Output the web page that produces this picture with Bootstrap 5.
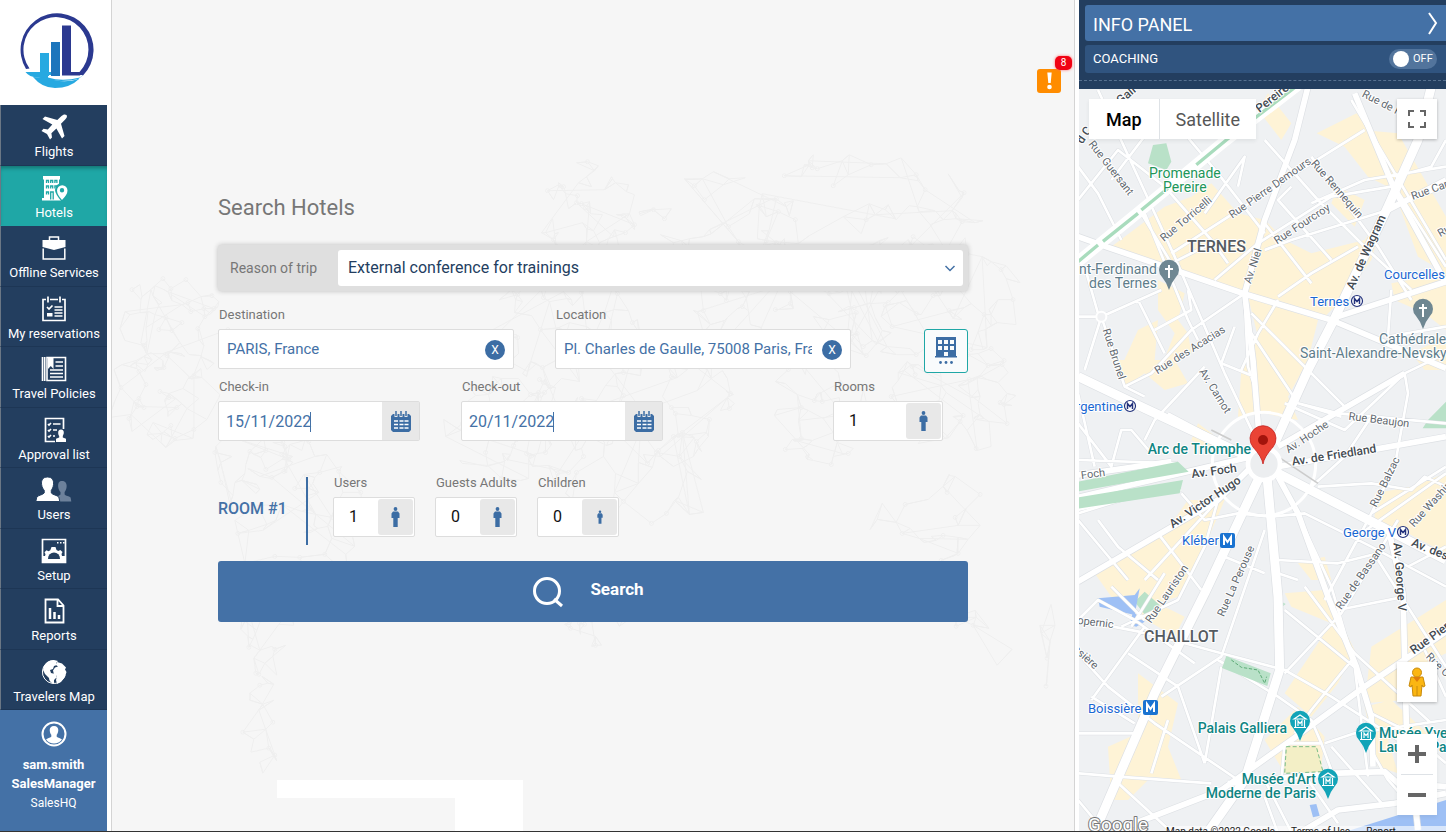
<!DOCTYPE html>
<html lang="en">
<head>
<meta charset="utf-8">
<meta name="viewport" content="width=device-width, initial-scale=1">
<title>Search Hotels</title>
<link href="https://cdn.jsdelivr.net/npm/bootstrap@5.3.0/dist/css/bootstrap.min.css" rel="stylesheet">
<style>
:root{--navy:#233e5f;--blue:#4471a6;--teal:#1fa7a6}
body{font-family:Roboto,"Liberation Sans",sans-serif;font-size:14px;background:#fff;color:#777}
svg{display:block}
.app-shell{border-bottom:1px solid #333}
/* sidebar */
.side{width:107px}
.brand-area{height:105px;padding-left:18px;padding-top:13px}
.side-item{background:var(--navy);color:#fff;min-height:60px;font-size:13px;line-height:18px;padding-top:8px;border-bottom:1px solid #1d3655;border-left:1px solid #6b7785;white-space:nowrap;text-decoration:none}
.side-item:hover{color:#fff}
.side-item.active{background:var(--teal);box-shadow:inset 0 4px 4px -2px #14706f;border-bottom-color:var(--teal)}
.side-item svg{width:28px;height:28px;margin-bottom:2px}
.profile{background:var(--blue);color:#fff;height:121px;padding-top:10px;line-height:19px;font-size:13px}
.profile svg{margin-bottom:7px}
.profile span{font-size:12px;line-height:20px}
/* main */
.stage{background:#f6f6f6;border-left:1px solid #d4d4d4;border-right:1px solid #d4d4d4;margin:0 4px}
.world{inset:0;width:100%;height:100%}
.alert-btn{top:55px;right:0;width:40px;height:40px}
.alert-count{top:1px;right:2px;width:17px;height:14px;border-radius:5px;background:#f00314;color:#fff;font-size:10px;line-height:14px;box-shadow:0 0 3px #f66}
.search-form{width:100%;max-width:750px;padding-top:193px}
.search-form h1{font-size:22px;line-height:30px;color:#777;margin-bottom:22px}
.reason{background:#dfdfdf;height:46px;padding:5px;border-radius:3px;box-shadow:0 0 5px #bbb}
.reason label{width:115px;padding-left:7px}
.reason .form-select{height:36px;color:var(--navy);border:0;border-radius:3px;font-size:16px;padding:0 30px 0 10px;background-position:right 7px center;background-size:12px 12px;--bs-form-select-bg-img:url("data:image/svg+xml,%3Csvg xmlns='http://www.w3.org/2000/svg' viewBox='0 0 12 12'%3E%3Cpath d='M1.500 4l4.500 4.500L10.500 4' fill='none' stroke='%234471a6' stroke-width='1.500'/%3E%3C/svg%3E")}
.place-row{gap:41px;margin-top:15px}
.date-row{gap:41px;margin-top:5px}
.room-row{margin-top:33px}
.flabel{display:block;font-size:13px;line-height:18px;margin-bottom:5px;white-space:nowrap;padding-left:1px}
.field{height:40px;background:#fff;border:1px solid #ddd;border-radius:2px}
.field input{width:100%;min-width:0;height:38px;border:0;background:transparent;color:var(--blue);font-size:15px;padding:0 38px 0 8px;outline:0}
.place{width:296px}
.clear-btn{right:8px;top:10px;width:20px;height:20px;border-radius:50%;border:0;background:#3c6da4;color:#fff;font-size:12px;line-height:20px}
.date{width:202px}
.date .field input{font-size:16px;padding:0 0 0 7px}
.caret{left:91px;top:10px;width:1px;height:20px;background:var(--blue)}
.tail-btn{border:0;background:#e8e8e8;flex:none;width:37px}
.count{width:82px}
.count .field{padding:1px}
.count .field input{height:36px;color:#111;font-size:16px;padding:0 0 2px 14px}
.count .tail-btn{width:35px;border-radius:3px}
.rooms{width:110px;margin-right:25px}
.nearby{width:44px;height:44px;margin-top:23px;border:1px solid var(--teal);border-radius:3px;background:#f9fbfc}
.room-name{width:90px;height:68px;border-right:2px solid #3c6da4;color:#4471a6;font-weight:500;font-size:16px;line-height:20px;padding-bottom:4px}
.room-fields{gap:20px;margin-left:25px;padding-bottom:11px}
.go{height:61px;margin-top:13px;background:var(--blue);color:#fff;border:0;border-radius:3px;font-size:17px;gap:26px;padding-right:16px}
.go span{padding-bottom:4px}
.foot-card{width:246px;margin-left:165px;z-index:1}
.foot-card .top-part{height:18px}
.foot-card .low-part{height:33px;width:68px}
/* info panel */
.info{width:367px;background:var(--navy)}
.info-head{height:89px;padding:5px 0 0 6px}
.info-title{height:36px;background:var(--blue);color:#fff;font-size:18px;padding:2px 8px 0;border-radius:3px 0 0 3px;border:0}
.coach{height:28px;background:#30547f;color:#fff;font-size:13px;margin-top:4px;padding:0 9px 0 8px;border-radius:3px 0 0 3px}
.coach .switch{width:48px;height:20px;border-radius:10px;background:#52749c;font-size:11px}
.coach .switch i{width:16px;height:16px;border-radius:50%;background:#fff;margin:0 4px 0 4px}
.dash{border-top:1px dashed #56708f;margin-top:7px;margin-left:-6px}
.map-area{background:#f0f1f3;overflow:hidden}
.city{inset:0;width:100%;height:100%}
.mapbtn{background:#fff;border:0;box-shadow:0 1px 3px #0004;color:#565656}
.maptype{left:10px;top:10px}
.maptype .mapbtn{height:40px;font-size:18px;padding:0 17px;box-shadow:none}
.maptype .mapbtn+.mapbtn{padding:0 16px}
.maptype .chosen{font-weight:500}
.full-btn{right:9px;top:10px;width:40px;height:40px}
.man-btn{right:9px;bottom:129px;width:40px;height:40px}
.zoom-btns{right:9px;bottom:16px;width:40px}
.zoom-btns .mapbtn{height:40px;box-shadow:none}
.credit{left:87px;right:0;bottom:0;height:5px;overflow:hidden;font-size:10px;line-height:12px;color:#222;background:#fff9}
.city text{font-family:Roboto,"Liberation Sans",sans-serif;font-size:11px;fill:#626970;paint-order:stroke;stroke:#fff;stroke-width:2px;stroke-linejoin:round}
.city .st text{text-anchor:middle;dominant-baseline:central}
.city .st .av{font-size:12px;fill:#444b52;font-weight:500}
.city .poi{font-size:14px}
.city .end{text-anchor:end}
.city .gr{fill:#22965a}.city .sl{fill:#607d8b}.city .mt{fill:#1967d2;font-size:13px}.city .te{fill:#0f8583;font-weight:500;font-size:14px}
.city .qu{font-size:16px;fill:#555b61;font-weight:500}
.city .logo-text{font-size:19px;fill:#fff;stroke:#777}
</style>
</head>
<body>
<div class="app-shell d-flex min-vh-100">

<nav class="side d-flex flex-column flex-shrink-0" aria-label="Main">
  <div class="brand-area">
    <svg width="76" height="76" viewBox="18 13 76 76" role="img" aria-label="Logo">
      <path d="M26 69A36.500 36.500 0 1 1 83 75.500H62V72H79.500A32.500 32.500 0 1 0 29.500 68.500z" fill="#2b3990"/>
      <path d="M25.500 72H51V76H62L83 75Q77 81 69 84Q76 81 79 79Q60 83 46 79L38 77.500Q29 77 25.500 72z" fill="#27a9e1"/>
      <path d="M33 77Q44 77 54 80Q66 83 79 79Q70 88 55 88Q42 88 33 77z" fill="#27a9e1"/>
      <path d="M48 77.500Q62 82 80 77.500L83 75H48z" fill="#fff"/><path d="M62 72h20l-2 3.500H62z" fill="#2b3990"/>
      <rect x="40" y="53" width="9" height="23" fill="#27a9e1"/><rect x="51" y="42" width="9" height="34" fill="#1c75bc"/>
      <path d="M62 25.500h9V75h-9z" fill="#2b3990"/>
    </svg>
  </div>
  <div class="d-flex flex-column flex-grow-1">
    <a href="#" class="side-item flex-fill d-flex flex-column align-items-center">
      <svg viewBox="0 0 28 28" fill="#fff"><path d="M26.500 2c-1.500-1.200-3.500-.5-5 1l-4.200 4L5 3.500 2.500 6l9.800 5.500-4.500 5-4.300-.7L1.500 18l5.500 3 3 5.500 2-2-.6-4.300 5-4.600L22 25.500l2.500-2.600L21 10.800l4.200-4.300C26.800 5 27.500 3.200 26.500 2z"/></svg>Flights</a>
    <a href="#" class="side-item active flex-fill d-flex flex-column align-items-center" aria-current="page">
      <svg viewBox="0 0 28 28"><path fill="#fff" d="M3 2h17v3.500h-1V25H4V5.500H3zM2 24h19v2.500H2z"/><path fill="none" stroke="#1fa7a6" stroke-width="1.300" d="M6.500 9V6.500h2V9m2.200 0V6.500h2V9m2.200 0V6.500h2V9M6.500 14.500V12h2v2.500m2.200 0V12h2v2.500m2.200 0V12h2v2.500M6.500 20.500V18h2v2.500m2.200 5V18h2.500v7.500"/><path d="M22 28q-7-8-7-12a7 7 0 0 1 14 0q0 4-7 12z" fill="#1fa7a6"/><path fill="#fff" fill-rule="evenodd" d="M22 26q-5-5.500-5-9.500a5 5 0 0 1 10.500 0q0 4-5.500 9.500zm0-7.500a2.200 2.200 0 1 0 0-4.400 2.200 2.200 0 0 0 0 4.400z"/></svg>Hotels</a>
    <a href="#" class="side-item flex-fill d-flex flex-column align-items-center">
      <svg viewBox="0 0 28 28"><path fill="#fff" d="M2.500 6h23v7L14 16 2.500 13z"/><path fill="none" stroke="#fff" stroke-width="1.500" d="M9.500 6V3h9v3M3.200 14.500V25h21.600V14.500"/></svg>Offline Services</a>
    <a href="#" class="side-item flex-fill d-flex flex-column align-items-center">
      <svg viewBox="0 0 28 28"><path fill="none" stroke="#fff" stroke-width="1.700" d="M6 4.500H3v21h22v-21h-3M10 4.500h8M8 1.500v6M20 1.500v6M12.500 4.500h3M7 12l2 2 3.500-3.500M14.500 12h8M14.500 15h8M14.500 18h8M14.500 21h8"/><path fill="#fff" d="M7 18h5.500v3.500H7z"/></svg>My reservations</a>
    <a href="#" class="side-item flex-fill d-flex flex-column align-items-center">
      <svg viewBox="0 0 28 28"><path fill="none" stroke="#fff" stroke-width="1.600" d="M7 2.500h18.500v23H7zM2.500 2v24M4.700 2v24M15.500 7H23M15.500 11H23M10 15h13M10 18.500h13M10 22h13"/><path fill="#fff" d="M8 2h5.500v12l-2.700-3L8 14z"/></svg>Travel Policies</a>
    <a href="#" class="side-item flex-fill d-flex flex-column align-items-center">
      <svg viewBox="0 0 28 28"><path fill="none" stroke="#fff" stroke-width="1.700" d="M23.500 13V2.500h-18v23H15M8 8l1 1 2-2M13 8h7.500M8 14l1 1 2-2M13 14h4M8 20l1 1 2-2M13 20h2"/><path fill="#fff" d="M21 13.500c2 0 3 1.500 2.800 3.500-.2 1.500-.8 2.300-1 3v1.500l3.200 1.300V26H16v-3.200l3.200-1.300V20c-.5-.7-1-1.500-1-3-.2-2 .8-3.500 2.800-3.500z"/></svg>Approval list</a>
    <a href="#" class="side-item flex-fill d-flex flex-column align-items-center">
      <svg viewBox="0 0 28 28" overflow="visible"><path fill="#6d819b" d="M22 5c3.500 0 5 2.700 4.600 6-.3 2.500-1.200 4-2 5v2.500c1.500 1.500 4 1.500 6 3l.7 4H18l-2-4 4.500-3V16c-1-1-2-2.500-2.300-5C18 7.700 18.500 5 22 5z"/><path fill="#fff" stroke="#233e5f" d="M7.500 1C12 1 14 4 13.500 8.500c-.3 3-1.300 4.500-2.200 5.700V17c1.700 2 5.500 2 7.500 4l1 4.500H-4.200l1-4.500c2-2 5.700-2 7.400-4v-2.800C3 13 2 11.500 1.600 8.500 1 4 3 1 7.500 1z"/></svg>Users</a>
    <a href="#" class="side-item flex-fill d-flex flex-column align-items-center">
      <svg viewBox="0 0 28 28"><path fill="none" stroke="#fff" stroke-width="1.700" d="M2.500 2.500h23v23h-23z"/><path fill="#fff" d="M17 5h1.500v1.500H17zM20 5h1.500v1.500H20zM23 5h1.500v1.500H23zM2.500 25V19H5l.5-1.800-1-2 2-2 2 1 1.800-1L11.500 10h4l1 3 1.800 1 2-1 2.200 2-1 2L22 19h3v6z"/><path fill="#233e5f" d="M8 21.500a6 6 0 0 1 12 0 6 6 0 0 1-2 3.500h-8a6 6 0 0 1-2-3.500z"/><path fill="#fff" d="M7 22h14v4H7z"/></svg>Setup</a>
    <a href="#" class="side-item flex-fill d-flex flex-column align-items-center">
      <svg viewBox="0 0 28 28"><path fill="none" stroke="#fff" stroke-width="1.800" d="M18 2.500H5.500v23h18V8.500zM17.500 2.500v6.500h6"/><path stroke="#fff" stroke-width="2.500" d="M10 11v11M14.500 15v7M19 18v4"/></svg>Reports</a>
    <a href="#" class="side-item flex-fill d-flex flex-column align-items-center">
      <svg viewBox="0 0 28 28"><path fill="none" stroke="#fff" d="M14 2.500A11.500 11.500 0 1 0 25 17"/><path fill="#fff" d="M4 8Q7 2 14 2l4 1-2 2 1 2-3 1-1 3-3 1 1 3 4 1 2 3-3 3v4q-5-2-5-6l-4-4-2-4zM17 4l5 1.500 4 4-1 2 1.500 2.500-1.500 5-4 5-4 2-1-4 1-4-3-1.500-1-4 2-3 3-1-2-1.500z"/></svg>Travelers Map</a>
  </div>
  <div class="profile d-flex flex-column align-items-center">
    <svg width="28" height="28" viewBox="0 0 28 28"><circle cx="14" cy="14" r="11.500" fill="none" stroke="#fff" stroke-width="2"/><path fill="#fff" d="M14 6c3.300 0 4.600 2.300 4.200 5-.2 2-.9 3-1.500 3.800v2c1.300 1.200 4 1.400 5.300 2.700A10 10 0 0 1 6 19.500c1.300-1.300 4-1.500 5.300-2.700v-2C10.600 14 10 13 9.800 11 9.400 8.300 10.700 6 14 6z"/></svg>
    <strong>sam.smith</strong><strong>SalesManager</strong><span>SalesHQ</span>
  </div>
</nav>

<main class="stage flex-grow-1 position-relative d-flex flex-column">
  <svg class="world position-absolute" viewBox="112 0 963 832" preserveAspectRatio="xMidYMid slice" fill="none" stroke="#efefef" aria-hidden="true"><path id="mesh" stroke-width="1"/></svg>
  <button type="button" class="alert-btn btn p-0 border-0 position-absolute" aria-label="Alerts">
    <svg width="40" height="40" viewBox="0 0 40 40"><rect x="3" y="14" width="24" height="24" rx="3" fill="#ff8c00"/><path d="M13.300 17.500h4.400l-1 10.500h-2.400z" fill="#fff"/><circle cx="15.500" cy="32" r="2.300" fill="#fff"/></svg>
    <span class="alert-count position-absolute">8</span>
  </button>
  <form class="search-form mx-auto position-relative">
    <h1 class="fw-normal">Search Hotels</h1>
    <div class="reason d-flex align-items-center">
      <label for="reason" class="flex-shrink-0">Reason of trip</label>
      <select id="reason" class="form-select"><option>External conference for trainings</option></select>
    </div>
    <div class="place-row d-flex align-items-start">
      <div class="place"><label class="flabel" for="dest">Destination</label>
        <div class="field position-relative"><input id="dest" value="PARIS, France"><button type="button" class="clear-btn position-absolute p-0" aria-label="Clear destination">X</button></div></div>
      <div class="place"><label class="flabel" for="loc">Location</label>
        <div class="field position-relative"><input id="loc" value="Pl. Charles de Gaulle, 75008 Paris, France"><button type="button" class="clear-btn position-absolute p-0" aria-label="Clear location">X</button></div></div>
      <button type="button" class="nearby ms-auto p-0 d-flex align-items-center justify-content-center" aria-label="Hotels list">
        <svg width="24" height="30" viewBox="0 0 24 30" fill="#3c6da4"><path fill-rule="evenodd" d="M2 1h20v19h1v1.500H1V20h1zm2 3v4h4V4zm6 0v4h4V4zm6 0v4h4V4zM4 10v4h4v-4zm6 0v4h4v-4zm6 0v4h4v-4zm-6 6v4h4v-4z"/><circle cx="6.500" cy="26.500" r="1.400"/><circle cx="12" cy="26.500" r="1.400"/><circle cx="17.500" cy="26.500" r="1.400"/></svg></button>
    </div>
    <div class="date-row d-flex align-items-start">
      <div class="date"><label class="flabel" for="cin">Check-in</label>
        <div class="field d-flex position-relative"><input id="cin" value="15/11/2022"><span class="caret position-absolute"></span><button type="button" class="tail-btn p-0 d-flex align-items-center justify-content-center" aria-label="Pick check-in"><svg width="20" height="21" viewBox="0 0 20 21"><use href="#calendar"/></svg></button></div></div>
      <div class="date"><label class="flabel" for="cout">Check-out</label>
        <div class="field d-flex position-relative"><input id="cout" value="20/11/2022"><span class="caret position-absolute"></span><button type="button" class="tail-btn p-0 d-flex align-items-center justify-content-center" aria-label="Pick check-out"><svg width="20" height="21" viewBox="0 0 20 21"><use href="#calendar"/></svg></button></div></div>
      <div class="count rooms ms-auto"><label class="flabel" for="rooms">Rooms</label>
        <div class="field d-flex"><input id="rooms" value="1"><button type="button" class="tail-btn p-0 d-flex align-items-center justify-content-center" aria-label="Add room"><svg width="9" height="20" viewBox="0 0 9 20"><use href="#person"/></svg></button></div></div>
    </div>
    <div class="room-row d-flex align-items-center">
      <div class="room-name d-flex align-items-center">ROOM #1</div>
      <div class="room-fields d-flex">
        <div class="count"><label class="flabel" for="users">Users</label>
          <div class="field d-flex"><input id="users" value="1"><button type="button" class="tail-btn p-0 d-flex align-items-center justify-content-center" aria-label="Add user"><svg width="9" height="20" viewBox="0 0 9 20"><use href="#person"/></svg></button></div></div>
        <div class="count"><label class="flabel" for="adults">Guests Adults</label>
          <div class="field d-flex"><input id="adults" value="0"><button type="button" class="tail-btn p-0 d-flex align-items-center justify-content-center" aria-label="Add adult"><svg width="9" height="20" viewBox="0 0 9 20"><use href="#person"/></svg></button></div></div>
        <div class="count"><label class="flabel" for="kids">Children</label>
          <div class="field d-flex"><input id="kids" value="0"><button type="button" class="tail-btn p-0 d-flex align-items-center justify-content-center" aria-label="Add child"><svg width="6" height="14" viewBox="0 0 9 20"><use href="#person"/></svg></button></div></div>
      </div>
    </div>
    <button type="submit" class="go w-100 d-flex align-items-center justify-content-center fw-bold">
      <svg width="32" height="32" viewBox="0 0 32 32" fill="none" stroke="#fff" stroke-width="3"><circle cx="15" cy="15" r="12.500"/><path d="M22 23l8 7"/></svg><span>Search</span></button>
  </form>
  <div class="foot-card mt-auto"><div class="top-part bg-white"></div><div class="low-part bg-white ms-auto"></div></div>
</main>

<aside class="info flex-shrink-0 d-flex flex-column">
  <div class="info-head">
    <button type="button" class="info-title w-100 d-flex align-items-center justify-content-between">INFO PANEL
      <svg width="10" height="24" viewBox="0 0 10 24" fill="none" stroke="#fff" stroke-width="2"><path d="M1 1l7 10-7 11"/></svg></button>
    <div class="coach d-flex align-items-center justify-content-between"><span>COACHING</span>
      <button type="button" class="switch d-flex align-items-center border-0 p-0 text-white" role="switch" aria-checked="false"><i></i>OFF</button></div>
    <div class="dash"></div>
  </div>
  <div class="map-area position-relative flex-grow-1">
    <svg class="city position-absolute" viewBox="1079 89 367 742" preserveAspectRatio="xMidYMid slice" role="img" aria-label="Map of Paris around the Arc de Triomphe">
      <defs>
        <g id="person" fill="#3c6da4"><circle cx="4.500" cy="2" r="1.900"/><path d="M2 4.500h5L8.500 6.500V11H6.700v9H2.300v-9H.5V6.500z"/></g>
        <g id="calendar"><path fill="#3c6da4" d="M2 3h16l2 2v14l-2 2H2l-2-2V5z"/><path stroke="#e8e8e8" stroke-width="3" d="M5 0v6M10 0v6M15 0v6"/><path stroke="#3c6da4" stroke-width="1.500" d="M5 0v5M10 0v5M15 0v5"/><path stroke="#fff" stroke-width="1.500" d="M3 10h4M8.500 10h4M13.500 10h4M3 13.500h4M8.500 13.500h4M13.500 13.500h4M3 17h4M8.500 17h4M13.500 17h4"/></g>
        <path id="minor" d="M60 270L290 770L440 1120L540 1330M0 600L120 450L260 560M130 720L60 580L0 500M100 540L260 330L420 520L560 700M190 640L280 790L420 720M200 640L330 960L360 1020M260 560L400 720L450 790M410 840L540 730L760 590L940 560M380 640L500 470L480 560M280 760L700 490L860 390M560 420L720 600L870 750L1000 870M640 560L600 600L760 780M700 610L860 540L1104 500M560 670L700 850M560 750L640 720L930 630M600 890L700 820L840 740M930 620L1104 560M950 560L1104 800M820 300L1104 780M700 470L900 740L1000 900M990 520L1060 500L1104 420M60 940L20 800M0 950L70 950L250 870M70 950L20 1110M70 950L140 1160L220 1120L340 990L500 880M230 990L340 930L330 870M180 900L260 1060M500 900L510 1100L530 1160M520 1000L660 1210L780 1240L1104 1270M520 940L800 1220L980 1120L1104 1060M940 870L930 1010L1104 980M490 1110L540 1000L600 900M470 980L430 1090L530 1130M620 1210L800 1290L980 1120M660 1210L790 1250M980 1120L990 1180L950 1400L870 1560L740 1800M700 1460L800 1370L880 1250M720 1460L880 1450L1000 1470L1040 1430L1104 1460M880 1540L1104 1400M850 1600L1104 1420M0 1180L50 1400M0 1270L100 1400L130 1290L160 1290L220 1360M200 1320L230 1260L380 1100M270 1240L440 1330M140 1160L200 1190M0 1380L300 1390M0 1540L130 1500L310 1470M310 1480L380 1560L480 1540L580 1550L680 1540L880 1640L1104 1760M0 1560L150 1740M200 1740L420 1500L380 1640L300 1800L130 1880M60 1560L120 1640L240 1740M240 1600L370 1770M260 1720L160 1880M100 1760L200 1860M0 1860L60 1800L170 1860L350 1990M200 1880L40 2100M0 1860L210 1900L430 1960L620 2010L760 2090L960 2220M430 2000L380 2290M250 2090L430 1970L560 1590M150 1960L300 2060L380 2290M0 1960L90 2060L230 2170L480 2340M40 2090L170 2170M0 2200L180 2200M0 2320L120 2330L400 2350M110 2340L280 2496M220 2320L270 2160M440 1670L560 1720M420 1980L600 2090L700 2160L730 2230L620 2230L610 2340M640 1500L760 1760L830 2000L870 2330M660 1740L600 1720M600 1680L780 1690L900 1660M620 1830L840 2010M680 1760L830 1960M620 2020L790 1840L960 1560M830 1970L700 2130L650 2200M780 1830L980 1790M830 1960L1060 2170M900 1680L1104 2000M740 2230L830 2200L1104 2160M730 2230L760 2310M760 2240L920 2420M560 2340L640 2496M690 2340L780 2470M600 2500L560 2390M0 2400L80 2496M840 2180L930 2340L1000 2420M990 1700L1104 1640M880 2140L1000 2200L1104 2290M1040 1950L1104 2090"/>
        <path id="major" d="M690 260L650 420L560 660L500 880L525 1080L545 1330M0 710L90 742L500 882L760 960L1104 1105M780 950L1104 845M830 280L950 570L1104 850M1104 540L930 630M600 1340L980 1120M600 1400L1104 1310M520 1370L0 1492M520 1400L420 1500L0 1745M150 1490L0 1525M0 1425L280 1385M600 1430L660 1540L750 1790L835 2000L880 2150L885 2300M930 1580L975 1780L985 2170L1020 2490M120 2490L430 2370L640 2220L860 2060L1104 1895M450 2350L760 2320L920 2315L960 2350L1104 2360M670 2496L780 2430L950 2410L1104 2380"/>
        <path id="prime" d="M0 1130L200 1225L510 1370M600 1420L930 1590L1104 1680M590 1330L690 1110L765 965L930 620L1020 420L1060 260M540 1440L380 1780L230 2080L50 2496M568 1440L600 1790L605 2010L500 2340L390 2496"/>
        <path id="church" d="M0 19Q-2 12-7 6A10 10 0 1 1 7 6Q2 12 0 19z"/>
      </defs>
      <g transform="translate(1078) scale(.33333)">
        <path fill="#eff1f3" d="M0 260H1110V2500H0z"/>
        <path fill="#fef3d6" d="M100 740L180 680L260 620L340 590L400 550L480 640L560 660L620 720L700 760L860 720L920 640L880 780L790 900L740 950L560 900L440 860L300 810zM510 890L720 960L690 1080L630 1190L660 1260L560 1240L480 1250L490 1110L540 1010zM240 840L320 880L300 960L330 1000L340 1060L250 1100L290 1000L240 930zM716 400L836 340L950 470L930 560L870 530L800 440zM850 390L960 400L1104 650V820L1020 770L950 580zM780 560L860 600L830 680L760 610zM570 280L640 370L610 420L540 330zM940 850L1104 820V990L1040 940L950 900zM100 1080L290 1080L330 1150L260 1170L200 1120L140 1160zM180 990L240 960L230 1080L130 1100zM1000 1060L1104 1010V1110L1040 1110zM890 1480L1000 1460L1104 1420V1660L990 1600L890 1560zM50 1720L260 1600L330 1500L440 1500L380 1640L300 1790L200 1820L100 1790zM200 1790L320 1850L290 1910L190 1850zM620 1780L740 1770L830 1950L780 2050L700 2150L620 2080L680 1990L760 1870L640 1820zM660 1690L740 1670L760 1740L700 1740zM180 2020L300 2110L270 2240L310 2340L220 2330L150 2400L100 2400L90 2240L180 2200zM880 1940L1104 1800V1960L1000 2010L980 2100L860 2110zM560 2220L660 2120L740 2210L730 2300L620 2320zM860 2120L940 2100L1080 2230L990 2190L930 2220L960 2320L900 2300zM360 1270L440 1330L420 1360L340 1320z"/>
        <path fill="#b9e1c8" d="M225 435l40-5 15 55-15 25-55-20zM170 1805l30-30 45 40-32 45zM1050 1260l54-55v80h-70zM605 1802l18 10-15 12z"/>
        <path fill="#9ec0f5" d="M60 1795l110-10 15-20-15 80-105-25zM165 1835l35 30-25 15-20-5zM800 2496L1104 2400V2496zM695 2415l20-3 10 35-20 5z"/>
        <g fill="none" stroke-linejoin="round">
          <use href="#minor" stroke="#dde0e4" stroke-width="11"/><use href="#major" stroke="#dde0e4" stroke-width="21"/><use href="#prime" stroke="#dde0e4" stroke-width="31"/>
          <use href="#minor" stroke="#fff" stroke-width="8"/><circle cx="558" cy="1392" r="155" stroke="#fff" stroke-width="9"/>
          <use href="#major" stroke="#fff" stroke-width="17"/><use href="#prime" stroke="#fff" stroke-width="27"/>
          <path d="M660 255L445 420L190 630L0 785" stroke="#fff" stroke-width="34"/><path d="M660 255L445 420L355 494M270 565L190 630M180 640L75 724M60 735L0 785" stroke="#a9dcbd" stroke-width="10"/>
          <circle cx="70" cy="950" r="15" fill="#f0f1f3" stroke="#fff" stroke-width="6"/>
          <path d="M600 1370l120 80M400 1290l60 30" stroke="#ccc" stroke-width="5"/>
        </g>
        <path fill="#b9e1c8" d="M0 1445L300 1385l32 30L0 1474zM0 1492l315-52-10 40L0 1526zM445 1968L578 2020l-10 38L432 2004z"/>
        <circle cx="558" cy="1392" r="48" fill="#eceef0" stroke="#fff" stroke-width="14"/>
        <path d="M625 2240h90l20 75-115 5z" fill="#f3efc6" stroke="#79bd86" stroke-width="3" stroke-dasharray="12 7"/>
        <path d="M460 1980l30 22 50 8 20 40 6-20" fill="none" stroke="#5cab76" stroke-width="3" stroke-dasharray="10 5"/>
      </g>
      <g class="st">
        <text transform="translate(1111 168) rotate(52)">Rue Guersant</text><text transform="translate(1186 219) rotate(-40)">Rue Torricelli</text>
        <text transform="translate(1270 188) rotate(-35)">Rue Pierre Demours</text><text transform="translate(1337 189) rotate(49)">Rue Rennequin</text>
        <text transform="translate(1302 224) rotate(-33)">Rue Fourcroy</text><text transform="translate(1441 186) rotate(-20)">Rue Cardinet</text>
        <text transform="translate(1253 266) rotate(-72)">Av. Niel</text><text class="av" transform="translate(1366 252) rotate(-66)">Av. de Wagram</text>
        <text transform="translate(1190 350) rotate(-32)">Rue des Acacias</text><text transform="translate(1114 354) rotate(72)">Rue Brunel</text>
        <text transform="translate(1215 391) rotate(58)">Av. Carnot</text><text transform="translate(1307 437) rotate(-34)">Av. Hoche</text>
        <text class="av" transform="translate(1334 455) rotate(-9)">Av. de Friedland</text><text transform="translate(1379 420) rotate(7)">Rue Beaujon</text>
        <text transform="translate(1385 482) rotate(-64)">Rue Balzac</text><text transform="translate(1438 496) rotate(-48)">Rue Washington</text>
        <text class="av" transform="translate(1214 471) rotate(-8)">Av. Foch</text><text transform="translate(1093 474) rotate(-8)">Foch</text>
        <text class="av" transform="translate(1205 502) rotate(-34)">Av. Victor Hugo</text><text class="av" transform="translate(1452 558) rotate(22)">Av. des Champs</text>
        <text class="av" transform="translate(1400 577) rotate(86)">Av. George V</text><text transform="translate(1361 576) rotate(-55)">Rue de Bassano</text>
        <text transform="translate(1167 594) rotate(-56)">Rue Lauriston</text><text transform="translate(1236 581) rotate(-66)">Rue La Perouse</text>
        <text transform="translate(1092 622) rotate(7)">Copernic</text><text transform="translate(1080 652) rotate(42)">Boissière</text>
        <text class="av" transform="translate(1434 635) rotate(-36)">Rue Pierre</text><text transform="translate(1440 667) rotate(45)">Rue Ch</text>
        <text transform="translate(1382 103) rotate(27)">Rue de P</text><text class="av" transform="translate(1272 98) rotate(-38)">Pereire</text><text transform="translate(1126 95) rotate(-40)" class="av">Gall</text>
        <text class="av" transform="translate(1084 135) rotate(-55)">d C</text><text transform="translate(1444 231) rotate(-30)">Ru</text>
      </g>
      <text class="poi gr" x="1149" y="178">Promenade</text><text class="poi gr" x="1163" y="192">Pereire</text>
      <text class="qu" x="1187" y="252">TERNES</text><text class="qu" x="1144" y="642">CHAILLOT</text>
      <text class="poi sl end" x="1157" y="274">Saint-Ferdinand</text><text class="poi sl end" x="1157" y="288">des Ternes</text>
      <text class="poi sl" x="1379" y="344">Cathédrale</text><text class="poi sl" x="1300" y="358">Saint-Alexandre-Nevsky</text>
      <text class="mt" x="1384" y="279">Courcelles</text><text class="mt" x="1310" y="306">Ternes</text><text class="mt end" x="1123" y="411">Argentine</text>
      <text class="mt" x="1343" y="537">George V</text><text class="mt" x="1182" y="545">Kléber</text><text class="mt" x="1088" y="713">Boissière</text>
      <text class="poi te end" x="1251" y="454">Arc de Triomphe</text><text class="poi te end" x="1287" y="733">Palais Galliera</text>
      <text class="poi te end" x="1316" y="784">Musée d'Art</text><text class="poi te end" x="1316" y="798">Moderne de Paris</text>
      <text class="poi te" x="1379" y="738">Musée Yves</text><text class="poi te" x="1379" y="752">Laurent Paris</text>
      <g fill="none" stroke="#23327c"><g id="mring"><circle cx="1357" cy="301" r="5.500" fill="#fff" stroke-width="1.200"/><path d="M1354.500 304v-5.500l2.500 3 2.500-3v5.500" stroke-width="1.500"/></g><use href="#mring" x="-227" y="105"/><use href="#mring" x="46" y="231"/></g>
      <g id="msq"><rect x="1220" y="533" width="15" height="15" rx="2" fill="#1a73d1"/><path d="M1224 545v-8l3.500 5 3.500-5v8" fill="none" stroke="#fff" stroke-width="2"/></g><use href="#msq" x="-77" y="167"/>
      <g fill="#6f8792"><use href="#church" x="1169" y="271"/><use href="#church" x="1423" y="310"/></g>
      <path d="M1169 265v13M1165 269h8M1423 304v13M1419 308h8" stroke="#fff" stroke-width="2"/>
      <g id="museum"><use href="#church" x="1300" y="722" fill="#12a4b8"/><path d="M1294 719l6-4 6 4zM1295.500 720v7M1304.500 720v7M1294 727.500h12M1298 726v-5l2 2.500 2-2.500v5" fill="none" stroke="#fff" stroke-width="1.200"/></g>
      <use href="#museum" x="66" y="12"/><use href="#museum" x="28" y="58"/>
      <path d="M1263 464Q1262 457 1253 447A13 13 0 1 1 1273 447Q1264 457 1263 464z" fill="#ea4335" stroke="#c5221f" stroke-width=".8"/><circle cx="1263" cy="440" r="5" fill="#a3140c"/>
      <text class="logo-text" x="1088" y="831">Google</text>
    </svg>
    <div class="maptype position-absolute d-flex shadow-sm"><button type="button" class="mapbtn chosen text-black border-end">Map</button><button type="button" class="mapbtn">Satellite</button></div>
    <button type="button" class="mapbtn full-btn position-absolute p-0 d-flex align-items-center justify-content-center" aria-label="Full screen"><svg width="18" height="18" viewBox="0 0 18 18" fill="none" stroke="#666" stroke-width="2"><path d="M1 6V1h5M12 1h5v5M17 12v5h-5M6 17H1v-5"/></svg></button>
    <button type="button" class="mapbtn man-btn position-absolute p-0 d-flex align-items-center justify-content-center" aria-label="Street view"><svg width="18" height="30" viewBox="0 0 18 30"><path d="M3 10h12l2 9-2 1-1-2-1 11H5L4 18l-1 2-2-1z" fill="#fbb612" stroke="#c88a0c"/><circle cx="9" cy="5.500" r="4.500" fill="#fbb612" stroke="#c88a0c"/><path d="M5 10h8l-4 5z" fill="#e07d0b"/><path d="M9 19v10" stroke="#c88a0c"/></svg></button>
    <div class="zoom-btns position-absolute shadow-sm bg-white d-flex flex-column">
      <button type="button" class="mapbtn p-0 d-flex align-items-center justify-content-center" aria-label="Zoom in"><svg width="18" height="18" viewBox="0 0 18 18" stroke="#666" stroke-width="4"><path d="M0 9h18M9 0v18"/></svg></button>
      <div class="border-top mx-1"></div>
      <button type="button" class="mapbtn p-0 d-flex align-items-center justify-content-center" aria-label="Zoom out"><svg width="18" height="18" viewBox="0 0 18 18" stroke="#666" stroke-width="4"><path d="M0 9h18"/></svg></button>
    </div>
    <div class="credit position-absolute d-flex gap-3"><span>Map data ©2022 Google</span><span>Terms of Use</span><span>Report</span></div>
  </div>
</aside>
</div>
<script src="https://cdn.jsdelivr.net/npm/bootstrap@5.3.0/dist/js/bootstrap.bundle.min.js"></script>
<script>
// Faint network-style world map: scattered nodes per land mass, linked to near neighbours.
let seed = 7;
const rnd = () => (seed = seed * 16807 % 2147483647) / 2147483647;
const lands = [[170,330,60,55,70],[160,400,60,50,60],[250,470,45,50,40],[300,520,70,80,60],[270,640,35,50,30],[262,730,20,60,20],
 [590,220,50,60,60],[720,230,90,60,60],[860,210,130,60,60],[920,300,110,70,90],[800,310,110,60,90],[560,330,80,60,80],[520,430,80,60,70],[660,400,80,70,80],
 [640,480,80,60,30],[600,620,40,30,25],[820,410,50,60,50],[960,400,70,60,70],[930,520,60,50,30],[980,640,40,40,8],[1050,640,15,60,8]];
let d = '';
for (const [cx, cy, rx, ry, n] of lands) {
  const pts = Array.from({length: n}, () => { const a = rnd() * 6.283, r = Math.sqrt(rnd()); return [Math.round(cx + rx * r * Math.cos(a)), Math.round(cy + ry * r * Math.sin(a))]; });
  pts.forEach((p, i) => {
    const near = pts.filter((q, j) => j !== i).sort((a, b) => Math.hypot(a[0]-p[0], a[1]-p[1]) - Math.hypot(b[0]-p[0], b[1]-p[1]));
    d += `M${p}L${near[0]}M${p}L${near[2]}`;
    if (i % 9 === 0) d += `M${p}L${near[Math.floor(n / 2)]}`;
    if (i % 4 === 0) d += `M${p[0]-2} ${p[1]}a2 2 0 1 0 4 0a2 2 0 1 0-4 0`;
  });
}
document.getElementById('mesh').setAttribute('d', d);
</script>
</body>
</html>
